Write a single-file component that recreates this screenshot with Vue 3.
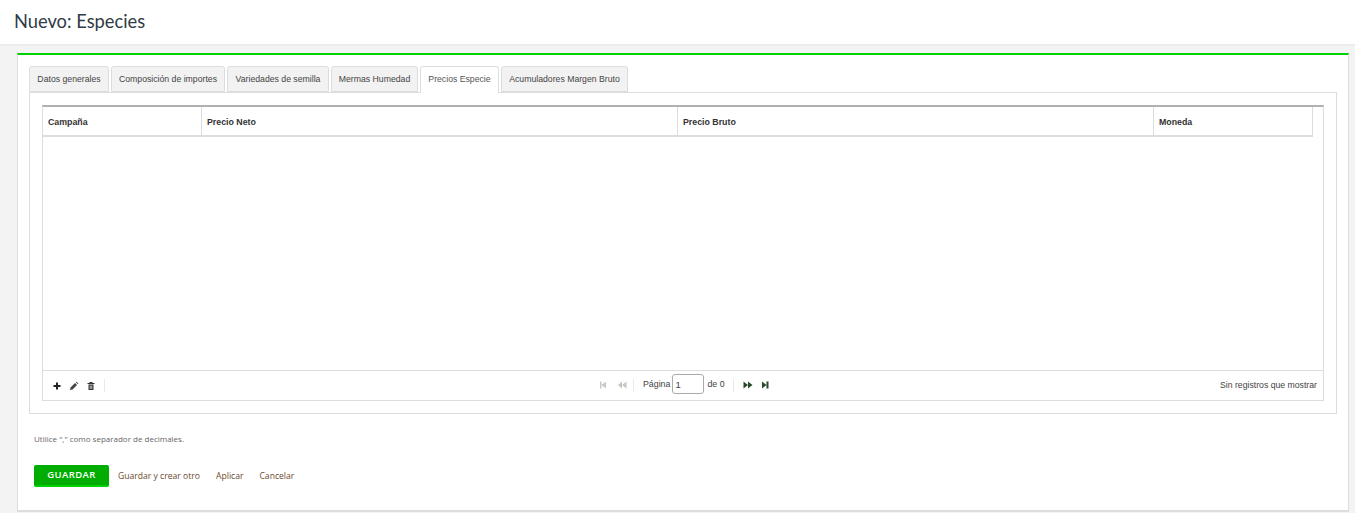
<script setup>
const tabs = [
  { label: 'Datos generales', width: 80 },
  { label: 'Composición de importes', width: 114 },
  { label: 'Variedades de semilla', width: 102 },
  { label: 'Mermas Humedad', width: 87 },
  { label: 'Precios Especie', width: 79, active: true },
  { label: 'Acumuladores Margen Bruto', width: 127 },
];

const columns = [
  { label: 'Campaña', width: 159 },
  { label: 'Precio Neto', width: 476 },
  { label: 'Precio Bruto', width: 476 },
  { label: 'Moneda', width: 158 },
];
</script>

<template>
  <div class="page">
    <header class="top">
      <h1>Nuevo: Especies</h1>
    </header>

    <main class="card">
      <div class="tabs">
        <div
          v-for="tab in tabs"
          :key="tab.label"
          class="tab"
          :class="{ active: tab.active }"
          :style="{ width: tab.width + 'px' }"
        >
          {{ tab.label }}
        </div>
      </div>

      <section class="panel">
        <div class="grid">
          <div class="grid-head">
            <div
              v-for="col in columns"
              :key="col.label"
              class="head-cell"
              :style="{ width: col.width + 'px' }"
            >
              {{ col.label }}
            </div>
          </div>

          <div class="grid-body"></div>

          <div class="pager">
            <div class="pager-left">
              <svg class="icon" viewBox="0 0 10 10">
                <path d="M4 1.500h2v2.500h2.500v2H6v2.500H4V6H1.500V4H4z" fill="#222" />
              </svg>
              <svg class="icon" viewBox="0 0 10 10">
                <path d="M1 9l.5-2.500L6 2l2 2-4.500 4.500zM6.800 1.200l.7-.5 1.800 1.800-.5.7z" fill="#444" />
              </svg>
              <svg class="icon" viewBox="0 0 10 10">
                <path d="M1.500 2h7v1h-7zM3.500 1h3v1h-3zM2.500 3.500h5V9h-5zM3.800 4.500v3.500h.7V4.500zM5.500 4.500v3.500h.7V4.500z" fill="#333" fill-rule="evenodd" />
              </svg>
              <span class="sep sep-left"></span>
            </div>

            <div class="pager-mid">
              <svg class="nav" viewBox="0 0 10 10">
                <path d="M2 1.500h1.500v7H2zM8 1.500v7L3.500 5z" fill="#c9c9c9" />
              </svg>
              <svg class="nav nav-gap" viewBox="0 0 10 10">
                <path d="M5 1.500v7L1 5zM9.500 1.500v7L5 5z" fill="#c9c5bc" />
              </svg>
              <span class="sep sep-a"></span>
              <span class="pager-text">Página</span>
              <input class="page-input" value="1" />
              <span class="pager-text">de 0</span>
              <span class="sep sep-b"></span>
              <svg class="nav" viewBox="0 0 10 10">
                <path d="M.5 1.500L5 5 .5 8.500zM5 1.500L9.500 5 5 8.500z" fill="#2b4a2b" />
              </svg>
              <svg class="nav nav-gap-b" viewBox="0 0 10 10">
                <path d="M1 1.500L5.500 5 1 8.500zM5.500 1.500H7.500v7H5.500z" fill="#2b4a2b" />
              </svg>
            </div>

            <div class="pager-right">Sin registros que mostrar</div>
          </div>
        </div>
      </section>

      <p class="note">Utilice "," como separador de decimales.</p>

      <div class="actions">
        <button class="save">GUARDAR</button>
        <a class="link">Guardar y crear otro</a>
        <a class="link">Aplicar</a>
        <a class="link">Cancelar</a>
      </div>
    </main>
  </div>
</template>

<style>
html,
body {
  margin: 0;
  background: #f3f3f3;
}
</style>

<style scoped>
.page {
  width: 1355px;
  height: 513px;
  overflow: hidden;
  background: #f3f3f3;
  font-family: "Liberation Sans", Arial, sans-serif;
  color: #333;
}

.top {
  height: 44px;
  background: #fff;
  border-bottom: 2px solid #ececec;
  padding-left: 14px;
}

.top h1 {
  margin: 0;
  font-family: Lato, sans-serif;
  font-weight: 400;
  font-size: 18.300px;
  line-height: 43px;
  color: #2f3b46;
}

.card {
  box-sizing: border-box;
  width: 1332px;
  height: 459px;
  margin: 7px 0 0 17px;
  padding: 11px 11px 0 11px;
  background: #fff;
  border-top: 2px solid #00d100;
  border-left: 1px solid #ddd;
  border-right: 1px solid #ddd;
  border-bottom: 2px solid #ddd;
}

.tabs {
  display: flex;
  gap: 2px;
  height: 26px;
}

.tab {
  box-sizing: border-box;
  height: 26px;
  background: #f2f2f2;
  border: 1px solid #ddd;
  border-radius: 3px 3px 0 0;
  font-size: 8.700px;
  line-height: 25px;
  text-align: center;
  white-space: nowrap;
  color: #444;
}

.tab.active {
  height: 27px;
  background: #fff;
  border-bottom: none;
  position: relative;
  z-index: 1;
  color: #555;
}

.panel {
  box-sizing: border-box;
  width: 1308px;
  height: 322px;
  padding: 12px;
  border: 1px solid #ddd;
}

.grid {
  box-sizing: border-box;
  width: 1282px;
  height: 296px;
  display: flex;
  flex-direction: column;
  border-top: 2px solid #b0b0b0;
  border-left: 1px solid #ddd;
  border-right: 1px solid #ddd;
  border-bottom: 1px solid #ddd;
}

.grid-head {
  box-sizing: border-box;
  display: flex;
  width: 1270px;
  height: 30px;
  flex: none;
  border-bottom: 2px solid #ddd;
  border-right: 1px solid #ddd;
}

.head-cell {
  box-sizing: border-box;
  padding-left: 5px;
  font-size: 8.800px;
  font-weight: 700;
  line-height: 30px;
  color: #333;
  border-right: 1px solid #ddd;
}

.head-cell:last-child {
  border-right: none;
}

.grid-body {
  flex: 1;
}

.pager {
  flex: none;
  box-sizing: border-box;
  height: 30px;
  display: flex;
  align-items: center;
  position: relative;
  border-top: 1px solid #ddd;
  padding-left: 9px;
}

.pager-left {
  display: flex;
  align-items: center;
  gap: 7px;
}

.icon {
  width: 10px;
  height: 10px;
}

.sep {
  display: inline-block;
  width: 1px;
  height: 13px;
  background: #eaeaea;
}

.sep-left {
  margin-left: 1px;
}

.pager-mid {
  position: absolute;
  left: 555px;
  top: 3px;
  display: flex;
  align-items: center;
  height: 22px;
}

.nav {
  width: 10px;
  height: 10px;
}

.nav-gap {
  margin-left: 9px;
}

.nav-gap-b {
  margin-left: 8px;
}

.sep-a {
  margin: 0 9px 0 6px;
}

.sep-b {
  margin: 0 9px 0 8px;
}

.pager-text {
  margin-bottom: 2px;
  font-size: 8.800px;
  color: #444;
}

.page-input {
  box-sizing: border-box;
  align-self: flex-start;
  width: 32px;
  height: 20px;
  margin: 0 3px 0 2px;
  padding: 0 2px;
  border: 1px solid #aaa;
  border-radius: 3px;
  font-family: inherit;
  font-size: 9.500px;
  color: #444;
  background: #fff;
  outline: none;
}

.pager-right {
  margin-left: auto;
  margin-bottom: 2px;
  padding-right: 6px;
  font-size: 8.700px;
  color: #444;
}

.note {
  margin: 20px 0 0 5px;
  font-family: "Open Sans", sans-serif;
  font-size: 8px;
  line-height: 10px;
  color: #666;
}

.actions {
  display: flex;
  align-items: center;
  margin: 21px 0 0 5px;
}

.save {
  box-sizing: border-box;
  width: 75px;
  height: 22px;
  padding: 0 0 2px;
  background: #00ad00;
  border: none;
  border-bottom: 2px solid #00d100;
  border-radius: 2px;
  font-family: "Open Sans", sans-serif;
  font-size: 9.500px;
  font-weight: 600;
  letter-spacing: 0.400px;
  color: #fff;
}

.link {
  margin-left: 9px;
  font-family: "Open Sans", sans-serif;
  font-size: 8.600px;
  color: #6b4a2f;
}

.link + .link {
  margin-left: 16px;
}
</style>
